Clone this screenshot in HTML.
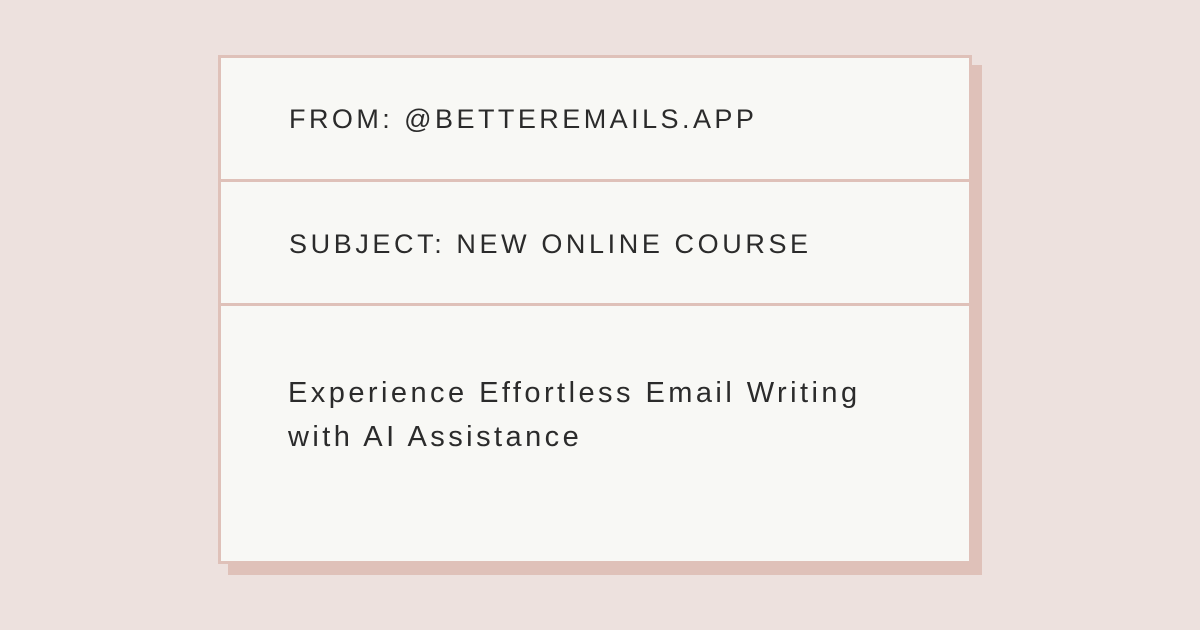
<!DOCTYPE html>
<html><head><style>
html,body{margin:0;padding:0}
body{width:1200px;height:630px;background:#ede1de;position:relative;overflow:hidden;font-family:"Liberation Sans",sans-serif;color:#2b2b2b}
.sh{position:absolute;left:228px;top:65px;width:754px;height:510px;background:#dfc1b9}
.card{position:absolute;left:218px;top:55px;width:748px;height:503px;background:#f8f8f5;border:3px solid #dfc1b9}
.div{position:absolute;left:0;width:748px;height:3px;background:#dfc1b9}
.t{position:absolute;left:68px;font-size:27px;letter-spacing:3.6px;white-space:nowrap}
.b{position:absolute;left:67px;top:313px;font-size:29px;letter-spacing:3.45px;line-height:44px;white-space:nowrap}
</style></head><body>
<div class="sh"></div>
<div class="card">
<div class="t" style="top:46px;letter-spacing:3.45px">FROM: @BETTEREMAILS.APP</div>
<div class="div" style="top:121px"></div>
<div class="t" style="top:171px">SUBJECT: NEW ONLINE COURSE</div>
<div class="div" style="top:245px"></div>
<div class="b">Experience Effortless Email Writing<br>with AI Assistance</div>
</div>
</body></html>
